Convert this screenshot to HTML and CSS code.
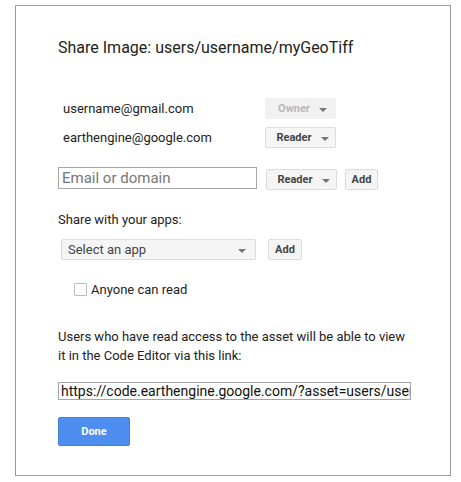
FILE: index.html
```html
<!DOCTYPE html>
<html>
<head>
<meta charset="utf-8">
<link rel="stylesheet" href="styles.css">
</head>
<body>
<div class="dialog">
  <h1 class="title">Share Image: users/username/myGeoTiff</h1>
  <div class="users">
    <div class="user">username@gmail.com</div>
    <div class="btn btn-menu disabled">Owner <span class="caret"></span></div>
    <div class="user">earthengine@google.com</div>
    <div class="btn btn-menu">Reader <span class="caret"></span></div>
  </div>
  <div class="add-row">
    <div class="input email">Email or domain</div>
    <div class="btn btn-menu reader2">Reader <span class="caret"></span></div>
    <div class="btn add1">Add</div>
  </div>
  <div class="label">Share with your apps:</div>
  <div class="app-row">
    <div class="select">Select an app <span class="caret"></span></div>
    <div class="btn add2">Add</div>
  </div>
  <label class="check-row"><span class="checkbox"></span>Anyone can read</label>
  <p class="note">Users who have read access to the asset will be able to view it in the Code Editor via this link:</p>
  <div class="input url">https://code.earthengine.google.com/?asset=users/username/myGeoTiff</div>
  <div class="done">Done</div>
</div>
</body>
</html>
```
FILE: styles.css
```css
* { box-sizing: border-box; }
html, body { margin: 0; padding: 0; background: #fff; }
body { font-family: Roboto, "Liberation Sans", Arial, sans-serif; color: #222; }

.dialog {
  margin: 5px 0 0 15px;
  width: 436px;
  height: 471px;
  border: 1px solid #9a9a9a;
  padding: 32px 0 0 42px;
}

.title {
  margin: 0;
  font-size: 16px;
  font-weight: 400;
  line-height: 20px;
  color: #222;
}

.users {
  margin: 40px 0 0 5px;
  display: grid;
  grid-template-columns: 202px 71px;
  row-gap: 8px;
  align-items: center;
}
.user { font-size: 13px; line-height: 21px; color: #222; }

.btn {
  height: 21px;
  display: flex;
  align-items: center;
  justify-content: center;
  font-size: 11px;
  font-weight: 700;
  color: #444;
  background: #f5f5f5;
  border: 1px solid #dcdcdc;
  border-radius: 2px;
}
.btn-menu { width: 71px; gap: 9px; padding-left: 4px; }
.btn.disabled { background: #f1f1f1; border-color: #f1f1f1; color: #b8b8b8; }

.caret {
  display: inline-block;
  width: 0; height: 0;
  border-left: 4px solid transparent;
  border-right: 4px solid transparent;
  border-top: 4px solid #777;
  margin-top: 2px;
}

.add-row { margin-top: 19px; display: flex; align-items: flex-start; }
.input {
  border: 1px solid #a6a6a6;
  white-space: nowrap;
  overflow: hidden;
}
.email {
  width: 199px;
  height: 22px;
  font-size: 15px;
  line-height: 20px;
  color: #777;
  padding-left: 3px;
}
.reader2 { margin: 2px 0 0 9px; }
.add1 { margin: 2px 0 0 8px; width: 33px; }

.label { margin-top: 22px; font-size: 13px; line-height: 16px; color: #222; }

.app-row { margin-top: 11px; display: flex; align-items: center; }
.select {
  margin-left: 3px;
  width: 195px;
  height: 21px;
  background: #f5f5f5;
  border: 1px solid #dcdcdc;
  border-radius: 2px;
  font-size: 13px;
  color: #444;
  display: flex;
  align-items: center;
  justify-content: space-between;
  padding: 0 9px 0 6px;
}
.add2 { margin-left: 12px; width: 34px; }

.check-row {
  margin: 23px 0 0 16px;
  display: flex;
  align-items: center;
  gap: 4px;
  font-size: 13px;
  line-height: 13px;
  color: #222;
}
.checkbox {
  width: 13px; height: 13px;
  border: 1px solid #bdbdbd;
  border-radius: 1px;
  background: #fff;
}

.note {
  margin: 31px 0 0 0;
  width: 350px;
  font-size: 13px;
  line-height: 19px;
  color: #222;
}

.url {
  margin-top: 17px;
  width: 353px;
  height: 18px;
  font-size: 14px;
  line-height: 16px;
  color: #111;
  padding-left: 2px;
}

.done {
  margin-top: 17px;
  width: 72px;
  height: 29px;
  background: #4d8ef0;
  border: 1px solid #3f7fe6;
  border-radius: 2px;
  color: #fff;
  font-size: 11px;
  font-weight: 700;
  display: flex;
  align-items: center;
  justify-content: center;
}
```
